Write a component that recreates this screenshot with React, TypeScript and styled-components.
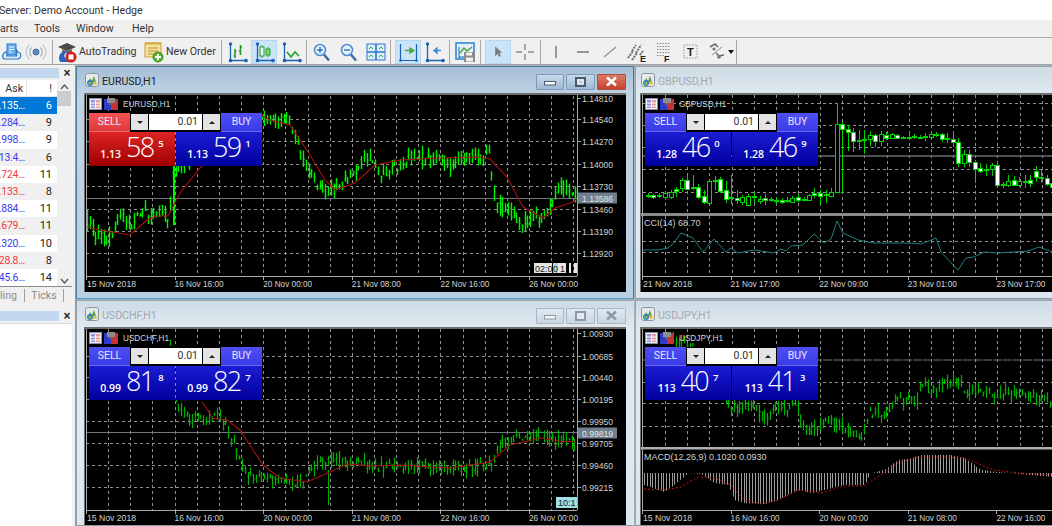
import React from "react";
import styled, { createGlobalStyle } from "styled-components";

const Global = createGlobalStyle`
  html, body { margin: 0; padding: 0; background: #fff; }
  #root { width: 1052px; height: 526px; overflow: hidden; }
  * { box-sizing: border-box; }
`;

const UI = `"Roboto", "Liberation Sans", sans-serif`;
const CHART = `"Liberation Sans", sans-serif`;

const Page = styled.div`
  width: 1052px; height: 526px; overflow: hidden; display: flex; flex-direction: column;
  font-family: ${UI}; color: #222; background: #f0f0f0;
`;
const TitleBar = styled.div`
  height: 20px; flex: none; background: #fff; font-size: 10.6px; line-height: 21px; color: #333;
  white-space: nowrap; text-indent: -1px;
`;
const MenuBar = styled.div`
  height: 17px; flex: none; background: #f0f0f0; display: flex; font-size: 10.6px; line-height: 18px; color: #333;
`;
const MenuItem = styled.span<{ $w: number }>` width: ${p => p.$w}px; flex: none; `;
const Toolbar = styled.div`
  height: 28px; flex: none; display: flex; align-items: center; background: #f0f0f0; padding-top: 1px;
  border-top: 1px solid #a9a9a9; border-bottom: 1px solid #a3a3a3;
`;
const ToolBtn = styled.div<{ $w?: number; $on?: boolean; $ml?: number; $text?: boolean }>`
  width: ${p => p.$w ?? 26}px; height: 24px; flex: none; display: flex; align-items: center;
  justify-content: ${p => (p.$text ? "flex-start" : "center")};
  padding-left: ${p => (p.$text ? 2 : 0)}px;
  margin-left: ${p => p.$ml ?? 0}px; font-size: 10.6px; gap: 2px; color: #333; white-space: nowrap;
  background: ${p => (p.$on ? "#cbe3f7" : "transparent")};
  border: 1px solid ${p => (p.$on ? "#b4d8f4" : "transparent")};
`;
const ToolSep = styled.div<{ $w?: number }>`
  width: ${p => p.$w ?? 4}px; height: 24px; flex: none; display: flex; justify-content: center;
  &::after { content: ""; width: 1px; height: 100%; background: #a8a8a8; }
`;
const Body = styled.div` flex: 1; display: flex; min-height: 0; `;

/* left docked panels */
const Side = styled.div`
  width: 75px; flex: none; display: flex; flex-direction: column; background: #f0f0f0; overflow: hidden; font-size: 10.6px;
`;
const PanelHead = styled.div`
  height: 14px; flex: none; display: flex; align-items: center; margin-top: 1px;
`;
const PanelStrip = styled.div` width: 59px; height: 10px; background: #c2d7ee; `;
const CloseX = styled.span`
  width: 16px; text-align: center; font-size: 12px; font-weight: 700; color: #222; line-height: 10px; font-family: "Liberation Sans", sans-serif;
`;
const Watch = styled.div` height: 206px; flex: none; display: flex; background: #fff; margin-right: 4px; `;
const WatchTable = styled.div` width: 57px; flex: none; display: flex; flex-direction: column; `;
const WatchHead = styled.div`
  height: 17px; display: grid; grid-template-columns: 27px 30px; line-height: 17px; background: #fff; color: #333; border-bottom: 1px solid #e4e4e4; font-size: 10.6px;
`;
const HeadCell = styled.div`
  text-align: right; padding-right: 3px; border-right: 1px solid #e2e2e2; &:last-child { padding-right: 5px; border-right: 0; }
`;
const WatchRow = styled.div<{ $sel?: boolean; $alt?: boolean }>`
  height: 17.3px; display: grid; grid-template-columns: 27px 30px; line-height: 18px; font-size: 11px;
  background: ${p => (p.$sel ? "#0078d7" : p.$alt ? "#f0f0f0" : "#fff")};
  color: ${p => (p.$sel ? "#fff" : "#222")};
  overflow: hidden;
`;
const AskCell = styled.div<{ $c: string }>`
  display: flex; justify-content: flex-end; padding-right: 2px; color: ${p => p.$c}; white-space: nowrap; font-size: 10.4px; letter-spacing: -0.2px;
`;
const SpreadCell = styled.div` text-align: right; padding-right: 5px; `;
const Scroll = styled.div`
  width: 14px; flex: none; background: #f0f0f0; display: flex; flex-direction: column; align-items: center; justify-content: space-between; padding: 4px 0 2px;
`;
const ScrollThumb = styled.div` width: 14px; height: 15px; background: #cdcdcd; margin-top: 1px; `;
const ScrollSpace = styled.div` flex: 1; `;
const Tabs = styled.div`
  height: 17px; flex: none; border-top: 1px solid #8a8a8a; display: flex; align-items: center; color: #8a8a8a; font-size: 10.6px; margin-right: 3px;
`;
const TabItem = styled.div<{ $w: number; $cut?: boolean }>`
  width: ${p => p.$w}px; flex: none; text-align: ${p => (p.$cut ? "left" : "center")}; border-right: 1px solid #a0a0a0; height: 13px; line-height: 13px;
`;
const SideGap = styled.div` height: 5px; flex: none; `;
const Navigator = styled.div` flex: 1; background: #fff; margin-right: 3px; border-top: 1px solid #d9d9d9; `;

/* MDI */
const Mdi = styled.div`
  flex: 1; display: grid; grid-template-columns: 558px 419px; grid-template-rows: 234px 226px;
  padding-top: 1px; background: #a8b2bd; border-left: 1px solid #8d98a3; overflow: hidden;
`;
const Win = styled.div<{ $active?: boolean; $right?: boolean; $top?: boolean }>`
  display: flex; flex-direction: column; overflow: hidden; min-width: 0;
  margin-left: ${p => (p.$right ? 1 : 0)}px;
  margin-bottom: ${p => (p.$top ? 1 : 0)}px;
  padding: ${p => (p.$right ? "0 0 0 4px" : "0 7px")};
  padding-bottom: ${p => (p.$top ? 6 : 0)}px;
  border: 1px solid ${p => (p.$active ? "#4c7f9c" : "#9aa4ae")};
  border-right-color: ${p => (p.$active ? "#2b7fa3" : "transparent")};
  border-bottom-color: ${p => (p.$active ? "#42a3c4" : "#8f98a1")};
  background: ${p => (p.$active ? "linear-gradient(#a5bed7 0, #c0d4e5 28px, #b8cfe2 100%)" : "linear-gradient(#cfdbe5 0, #e0eaf1 30px, #dbe7f0 100%)")};
`;
const WinTitle = styled.div`
  height: 26px; flex: none; display: flex; align-items: center; padding-left: 1px; gap: 3px;
`;
const WinName = styled.span<{ $active?: boolean }>`
  font-size: 10.6px; color: ${p => (p.$active ? "#222" : "#a3a9af")}; flex: 1; padding-top: 2px;
`;
const WinButtons = styled.div` display: flex; gap: 2px; margin-top: 3px; `;
const WinBtn = styled.div<{ $close?: boolean; $active?: boolean; $w: number }>`
  width: ${p => p.$w}px; height: 16px; display: flex; align-items: center; justify-content: center;
  border: 1px solid ${p => (p.$active ? (p.$close ? "#a8503e" : "#7f9ab4") : "#aab7c2")};
  border-radius: 1px;
  background: ${p =>
    p.$active
      ? p.$close
        ? "linear-gradient(#dc7a66, #c8402e)"
        : "linear-gradient(#c8daea, #9fbad3)"
      : "linear-gradient(#e0e9f0, #cbd7e1)"};
`;
const Frame = styled.div`
  flex: 1; position: relative; min-height: 0; background: #000;
  border-top: 2px solid #6e6e6e; border-left: 1px solid #6e6e6e; overflow: hidden;
`;
const ChartSvg = styled.svg` display: block; `;

/* one-click trading panel */
const Trade = styled.div`
  position: absolute; left: 4px; top: 18px; width: 173px; display: flex; flex-direction: column;
  font-family: "Open Sans", "Liberation Sans", sans-serif; color: #fff;
`;
const TradeTop = styled.div` height: 19px; display: flex; justify-content: space-between; `;
const SmallBtn = styled.div<{ $red?: boolean }>`
  width: 41px; height: 19px; text-align: center; font-size: 10.5px; line-height: 17px; color: #e4e6ff;
  background: ${p => (p.$red ? "linear-gradient(#f65252, #dc3a3a)" : "linear-gradient(#4f4ff4, #3a3ae6)")};
  box-shadow: inset 0 -1px 0 ${p => (p.$red ? "#e86a6a" : "#6a6af0")}, inset 0 -2px 0 ${p => (p.$red ? "#dc3a3a" : "#3a3ae6")};
  font-family: ${UI};
`;
const LotBox = styled.div`
  width: 91px; height: 19px; display: flex; background: #000; padding: 1px 1px 2px; gap: 1px; color: #333;
  font-family: ${UI};
`;
const LotArrow = styled.div`
  width: 17px; flex: none; background: #e4e4e4; display: flex; align-items: center; justify-content: center;
`;
const LotValue = styled.div`
  flex: 1; background: #fff; text-align: right; font-size: 10.5px; line-height: 16px; padding-right: 4px;
`;
const TradeBottom = styled.div` height: 34px; display: flex; gap: 1px; `;
const PriceCell = styled.div<{ $red?: boolean }>`
  flex: 1; display: flex; align-items: flex-start; justify-content: center; line-height: 1;
  background: ${p => (p.$red ? "linear-gradient(#de2424, #a00000)" : "linear-gradient(#1c1cd4, #00009e)")};
`;
const PriceHead = styled.span` font-size: 10.5px; font-weight: 600; margin-top: 17px; margin-right: 5px; `;
const PriceMain = styled.span` font-size: 27px; font-weight: 300; margin-top: 1px; letter-spacing: -1.8px; `;
const PricePip = styled.span` font-size: 9.5px; font-weight: 600; margin-top: 7px; margin-left: 5px; `;

/* ---------- chart helpers ---------- */
type Pt = [number, number];
const rng = (seed: number) => () => {
  seed = (seed * 16807) % 2147483647;
  return seed / 2147483647;
};
const interp = (k: Pt[], x: number) => {
  if (x <= k[0][0]) return k[0][1];
  for (let i = 1; i < k.length; i++) {
    if (x <= k[i][0]) {
      const t = (x - k[i - 1][0]) / (k[i][0] - k[i - 1][0]);
      return k[i - 1][1] + t * (k[i][1] - k[i - 1][1]);
    }
  }
  return k[k.length - 1][1];
};
const barsPath = (k: Pt[], x0: number, x1: number, seed: number, vol = 5) => {
  const r = rng(seed);
  let d = "";
  for (let x = x0; x < x1; x += 2.77) {
    const m = interp(k, x);
    const o = m + (r() - 0.5) * vol;
    const c = m + (r() - 0.5) * vol;
    const h = Math.min(o, c) - r() * vol * 0.7;
    const l = Math.max(o, c) + r() * vol * 0.7;
    const X = Math.round(x) + 0.5;
    d += `M${X} ${h.toFixed(1)}V${l.toFixed(1)}M${X - 1} ${o.toFixed(1)}H${X}M${X} ${c.toFixed(1)}H${X + 1}`;
  }
  return d;
};
const line = (k: Pt[]) => "M" + k.map(p => p.join(" ")).join("L");

const gridXs = (from: number, to: number) => {
  const a: number[] = [];
  for (let x = from; x < to; x += 22.15) a.push(Math.round(x) + 0.5);
  return a;
};

const GridLines: React.FC<{ ys: number[]; xFrom: number; xTo: number; yTop: number; yBot: number }> = ({ ys, xFrom, xTo, yTop, yBot }) => (
  <g stroke="#8f8f8f" strokeDasharray="3 3" shapeRendering="crispEdges" strokeWidth={1}>
    {ys.map(y => <line key={y} x1={xFrom} x2={xTo} y1={y + 0.5} y2={y + 0.5} />)}
    {gridXs(xFrom + 22.15, xTo).map(x => <line key={x} x1={x} x2={x} y1={yTop} y2={yBot} />)}
  </g>
);

const Dates: React.FC<{ labels: string[]; x0: number; y: number; xEnd: number; top: number }> = ({ labels, x0, y, xEnd, top }) => (
  <g>
    <g stroke="#a8a8a8" shapeRendering="crispEdges">
      <line x1={x0} x2={xEnd} y1={y + 0.5} y2={y + 0.5} />
      <line x1={x0 + 0.5} x2={x0 + 0.5} y1={top} y2={y + 4} />
      {labels.map((_, i) => {
        const x = Math.round(x0 + 88.6 * i) + 0.5;
        return <line key={i} x1={x} x2={x} y1={y} y2={y + 4} />;
      })}
    </g>
    <g fill="#d2d2d2" fontFamily={CHART} fontSize="9">
      {labels.map((l, i) => <text key={l} x={x0 + 88.6 * i + (i ? 0 : 1)} y={y + 10.5} textLength={49} lengthAdjust="spacingAndGlyphs">{l}</text>)}
    </g>
  </g>
);

const Prices: React.FC<{ rows: [string, number][]; x: number; yTop: number; yBot: number }> = ({ rows, x, yTop, yBot }) => (
  <g>
    <line x1={x + 0.5} x2={x + 0.5} y1={yTop} y2={yBot} stroke="#a8a8a8" shapeRendering="crispEdges" />
    {rows.map(([t, y]) => (
      <g key={t}>
        <line x1={x} x2={x + 4} y1={y + 0.5} y2={y + 0.5} stroke="#a8a8a8" shapeRendering="crispEdges" />
        <text x={x + 5} y={y + 3.5} fill="#d2d2d2" fontFamily={CHART} fontSize="9" textLength={31} lengthAdjust="spacingAndGlyphs">{t}</text>
      </g>
    ))}
  </g>
);

const Bid: React.FC<{ label: string; x: number; y: number }> = ({ label, x, y }) => (
  <g>
    <rect x={x + 1} y={y - 5.5} width={39} height={11} fill="#6f7f90" />
    <text x={x + 5} y={y + 3.5} fill="#e2e6ea" fontFamily={CHART} fontSize="9" textLength={31} lengthAdjust="spacingAndGlyphs">{label}</text>
  </g>
);

const LEFT_DATES = ["15 Nov 2018", "16 Nov 16:00", "20 Nov 00:00", "21 Nov 08:00", "22 Nov 16:00", "26 Nov 00:00"];

const eurBars: Pt[] = [[86, 222], [90, 218], [95, 243], [100, 232], [105, 240], [110, 235], [115, 228], [120, 212], [125, 224], [130, 224], [140, 214], [150, 212], [160, 211], [168, 222], [173, 172], [178, 168], [262, 120], [280, 122], [290, 118], [295, 140], [300, 150], [305, 165], [315, 182], [320, 190], [330, 190], [340, 185], [350, 176], [360, 165], [370, 158], [380, 175], [390, 170], [400, 165], [410, 158], [420, 158], [430, 160], [440, 160], [450, 165], [460, 160], [470, 158], [480, 155], [490, 153], [492, 188], [497, 205], [505, 210], [513, 215], [523, 222], [533, 216], [540, 220], [550, 210], [555, 195], [560, 187], [570, 190], [576, 198]];
const eurMa: Pt[] = [[87, 227], [100, 230], [130, 235], [147, 220], [157, 216], [168, 216], [180, 193], [200, 168], [262, 116], [270, 120], [290, 125], [310, 155], [325, 180], [335, 190], [355, 183], [375, 165], [400, 160], [440, 158], [480, 157], [490, 159], [507, 177], [523, 207], [543, 218], [555, 208], [573, 202], [576, 199]];

const chfBars: Pt[] = [[170, 345], [176, 400], [180, 410], [187, 418], [207, 420], [220, 415], [227, 430], [233, 443], [243, 465], [247, 475], [253, 478], [267, 478], [280, 482], [293, 482], [303, 485], [310, 470], [320, 460], [340, 462], [360, 463], [377, 467], [420, 466], [470, 468], [490, 465], [500, 445], [510, 440], [530, 436], [545, 437], [560, 442], [576, 440]];
const chfMa: Pt[] = [[202, 402], [213, 418], [227, 420], [240, 430], [253, 450], [263, 465], [280, 478], [307, 482], [330, 472], [347, 464], [373, 466], [400, 465], [450, 468], [490, 462], [510, 445], [540, 438], [560, 441], [576, 442]];

const gbpRaw: [number, number, number, number, number, number][] = [
  [647, 195, 196, 193, 198, 0], [652, 195, 197, 194, 199, 0], [658, 195, 196, 193, 198, 0], [664, 193, 197, 191, 200, 1],
  [670, 192, 197, 190, 199, 1], [675, 189, 191, 187, 197, 0], [681, 180, 188, 178, 192, 1], [686, 180, 189, 176, 190, 0],
  [692, 187, 188, 175, 190, 0], [697, 187, 197, 184, 199, 0], [703, 196, 202, 190, 204, 0], [708, 181, 203, 180, 204, 1],
  [714, 180, 181, 176, 190, 0], [719, 179, 191, 177, 193, 0], [725, 190, 199, 181, 203, 0], [730, 197, 198, 175, 204, 0],
  [736, 198, 200, 190, 204, 0], [741, 197, 202, 195, 205, 1], [747, 196, 205, 194, 206, 1], [753, 196, 197, 192, 203, 0],
  [759, 199, 201, 196, 204, 1], [764, 198, 200, 194, 205, 0], [770, 199, 200, 197, 202, 0], [775, 200, 201, 197, 205, 0],
  [781, 200, 202, 198, 204, 0], [786, 200, 201, 197, 203, 0], [791, 198, 202, 196, 203, 1], [797, 197, 200, 194, 202, 0],
  [803, 199, 200, 197, 201, 0], [808, 195, 200, 194, 201, 1], [813, 193, 195, 188, 198, 0], [819, 193, 196, 190, 205, 0],
  [825, 194, 195, 190, 203, 0], [830, 192, 196, 188, 197, 1],
  [836, 124, 192, 103, 192, 1], [841, 124, 129, 122, 193, 0], [847, 129, 132, 125, 151, 0], [852, 132, 141, 128, 152, 0],
  [858, 140, 141, 130, 150, 0], [863, 139, 140, 130, 154, 0], [869, 135, 139, 131, 146, 1], [874, 135, 141, 134, 147, 0],
  [880, 134, 141, 131, 146, 1], [885, 135, 138, 132, 140, 0], [891, 134, 138, 133, 139, 1], [896, 135, 138, 134, 139, 0],
  [902, 137, 138, 136, 139, 0], [908, 137, 138, 133, 140, 0], [913, 136, 137, 134, 139, 0], [919, 137, 138, 135, 139, 0],
  [924, 136, 137, 133, 141, 0], [930, 134, 137, 133, 138, 1], [935, 134, 135, 132, 137, 0], [941, 134, 139, 133, 142, 0],
  [946, 138, 139, 133, 143, 0], [952, 139, 142, 132, 147, 0], [957, 142, 163, 138, 167, 0], [963, 154, 163, 150, 167, 1],
  [968, 154, 162, 150, 167, 0], [974, 162, 169, 160, 183, 0], [979, 168, 171, 163, 173, 0], [985, 169, 170, 164, 176, 0],
  [991, 165, 169, 163, 176, 1], [996, 165, 185, 162, 186, 0], [1002, 184, 185, 182, 188, 0], [1007, 181, 185, 175, 187, 1],
  [1013, 180, 185, 176, 186, 0], [1018, 181, 185, 177, 187, 1], [1024, 181, 182, 175, 188, 0], [1029, 180, 183, 175, 187, 0],
  [1035, 171, 177, 166, 182, 0], [1040, 177, 178, 170, 183, 0], [1046, 178, 184, 175, 186, 0], [1051, 183, 187, 175, 190, 0],
];
const cci: Pt[] = [[642, 250], [657, 250], [667, 248], [673, 243], [680, 233], [692, 238], [702, 252], [713, 239], [725, 252], [730, 248], [737, 253], [753, 250], [773, 253], [780, 249], [785, 251], [790, 246], [802, 245], [813, 234], [823, 243], [830, 239], [836, 221], [842, 233], [857, 240], [873, 243], [907, 243], [920, 244], [935, 238], [940, 252], [957, 270], [965, 258], [973, 257], [983, 252], [997, 253], [1027, 251], [1038, 247], [1052, 252]];

const jpyBars: Pt[] = [[672, 343], [690, 345], [729, 407], [747, 405], [757, 412], [767, 416], [773, 408], [787, 408], [797, 405], [800, 425], [807, 430], [817, 428], [827, 420], [837, 425], [847, 432], [860, 435], [865, 425], [868, 415], [875, 412], [888, 412], [893, 398], [907, 402], [917, 398], [920, 385], [928, 390], [940, 385], [952, 382], [960, 383], [963, 390], [977, 390], [980, 395], [988, 393], [1013, 395], [1027, 392], [1037, 400], [1052, 403]];
const macdVal: Pt[] = [[643, 485], [663, 492], [673, 485], [687, 473], [700, 474], [713, 483], [727, 485], [733, 500], [743, 503], [763, 504], [777, 500], [797, 490], [810, 493], [823, 490], [843, 485], [863, 485], [870, 473], [883, 470], [897, 460], [907, 459], [920, 455], [950, 455], [963, 458], [980, 470], [997, 472], [1052, 477]];
const macdSig: Pt[] = [[643, 489], [663, 490], [680, 487], [697, 477], [713, 478], [730, 485], [743, 500], [760, 504], [777, 500], [797, 490], [820, 493], [843, 486], [863, 486], [883, 473], [897, 463], [917, 457], [940, 457], [963, 458], [993, 470], [1017, 473], [1052, 475]];

const EurChart = () => (
  <ChartSvg width={540} height={197} viewBox="85 95 540 197">
    <GridLines ys={[119, 141, 164, 186, 209, 231, 253]} xFrom={86} xTo={577} yTop={96} yBot={276} />
    <line x1={86} x2={577} y1={198.5} y2={198.5} stroke="#6c7580" shapeRendering="crispEdges" />
    <path d={barsPath(eurBars, 87, 577, 91, 11)} stroke="#00f000" fill="none" strokeWidth={1.4} />
    <path d="M173.5 225V166M174.5 225V166" stroke="#00f000" />
    <path d={line(eurMa)} stroke="#a81010" fill="none" strokeWidth={1.1} />
    <Prices x={577} yTop={95} yBot={276} rows={[["1.14810", 98], ["1.14540", 119], ["1.14270", 141], ["1.14000", 164], ["1.13730", 186], ["1.13460", 209], ["1.13190", 231], ["1.12920", 253]]} />
    <Bid label="1.13586" x={577} y={198} />
    <Dates labels={LEFT_DATES} x0={86} y={276} xEnd={577} top={95} />
    <g fontFamily={CHART} fontSize="9">
      <rect x={534} y={263} width={18} height={10} fill="#e6e6e6" />
      <rect x={553} y={263} width={5} height={10} fill="#a8dce0" />
      <rect x={558} y={263} width={8} height={10} fill="#e6e6e6" />
      <rect x={569} y={263} width={2} height={10} fill="#e6e6e6" />
      <rect x={574} y={263} width={3} height={10} fill="#e6e6e6" />
      <text x={535} y={271.5} fill="#222">02:0</text>
      <text x={553} y={271.5} fill="#222">0</text>
      <text x={560} y={271.5} fill="#222">1</text>
    </g>
  </ChartSvg>
);

const ChfChart = () => (
  <ChartSvg width={540} height={197} viewBox="85 329 540 197">
    <GridLines ys={[356, 377, 399, 421, 443, 465, 487]} xFrom={86} xTo={577} yTop={329} yBot={510} />
    <line x1={86} x2={577} y1={432.5} y2={432.5} stroke="#6c7580" shapeRendering="crispEdges" />
    <path d={barsPath(chfBars, 170, 577, 57, 10)} stroke="#00b000" fill="none" strokeWidth={1.2} />
    <path d="M328.5 470V505" stroke="#00b000" />
    <path d={line(chfMa)} stroke="#a81010" fill="none" strokeWidth={1.1} />
    <Prices x={577} yTop={329} yBot={510} rows={[["1.00930", 333], ["1.00685", 356], ["1.00440", 377], ["1.00195", 399], ["0.99950", 421], ["0.99705", 443], ["0.99460", 465], ["0.99215", 487]]} />
    <Bid label="0.99819" x={577} y={433} />
    <Dates labels={LEFT_DATES} x0={86} y={510} xEnd={577} top={329} />
    <rect x={556} y={497} width={21} height={11} fill="#9fdfe6" />
    <text x={558} y={506} fontFamily={CHART} fontSize="9" fill="#123">10:1</text>
  </ChartSvg>
);

const GbpChart = () => (
  <ChartSvg width={412} height={197} viewBox="640 95 412 197">
    <GridLines ys={[103, 125, 147, 169, 192]} xFrom={642} xTo={1052} yTop={95} yBot={213} />
    <line x1={642} x2={1052} y1={156} y2={156} stroke="#666c72" strokeWidth={1.5} />
    {gbpRaw.map(([x, t, b, h, l, dark]) => (
      <g key={x}>
        <line x1={x + 0.5} x2={x + 0.5} y1={h} y2={l} stroke="#00d400" shapeRendering="crispEdges" />
        <rect x={x - 1.5} y={t} width={4} height={Math.max(b - t, 1)} fill={dark ? "#000" : "#fff"} stroke="#00d400" strokeWidth={1} shapeRendering="crispEdges" />
      </g>
    ))}
    <rect x={640} y={213} width={412} height={3} fill="#8a8a8a" />
    <GridLines ys={[241, 252]} xFrom={642} xTo={1052} yTop={216} yBot={276} />
    <path d={line(cci)} stroke="#1f7f80" fill="none" strokeWidth={1} />
    <text x={643} y={226} fill="#d2d2d2" fontFamily={CHART} fontSize="9">CCI(14) 68.70</text>
    <Dates labels={["21 Nov 2018", "21 Nov 17:00", "22 Nov 09:00", "23 Nov 01:00", "23 Nov 17:00"]} x0={641} y={276} xEnd={1052} top={95} />
  </ChartSvg>
);

const macdBars = () => {
  let d = "";
  for (let x = 643; x < 1052; x += 2.77) {
    const X = Math.round(x) + 0.5;
    d += `M${X} 473V${interp(macdVal, x).toFixed(1)}`;
  }
  return d;
};

const JpyChart = () => (
  <ChartSvg width={412} height={197} viewBox="640 329 412 197">
    <GridLines ys={[382, 403, 426]} xFrom={642} xTo={1052} yTop={329} yBot={447} />
    <line x1={642} x2={1052} y1={360} y2={360} stroke="#6c7278" strokeWidth={1} strokeDasharray="9 1" />
    <path d={barsPath(jpyBars, 672, 1052, 33, 10)} stroke="#00b000" fill="none" strokeWidth={1.2} />
    <rect x={640} y={447} width={412} height={2.5} fill="#b0b0b0" />
    <path d={macdBars()} stroke="#9c9c9c" fill="none" strokeWidth={1} />
    <path d={line(macdSig)} stroke="#c41010" fill="none" strokeWidth={1} strokeDasharray="2 2" />
    <text x={643} y={460} fill="#d2d2d2" fontFamily={CHART} fontSize="9">MACD(12,26,9) 0.1020 0.0930</text>
    <Dates labels={LEFT_DATES.slice(0, 5)} x0={641} y={510} xEnd={1052} top={329} />
  </ChartSvg>
);

/* ---------- icons ---------- */
const MtLogo = () => (
  <svg width="14" height="14" viewBox="0 0 14 14">
    <rect x="0.5" y="0.5" width="13" height="13" rx="2" fill="#e6e9ec" stroke="#8c96a0" />
    <path d="M3 11 L5 5 L7 8 L9 3 L11 9 Z" fill="#5aa04a" />
    <circle cx="5" cy="10" r="3" fill="#2f7fc4" />
    <path d="M3 9 h4 l-1 3 h-2z" fill="#7ab648" />
    <path d="M8 9 l3-1 1 3 -3 1z" fill="#e8b93a" />
  </svg>
);
const ChartLegendIcons = styled.div`
  position: absolute; left: 4px; top: 3px; display: flex; align-items: center; gap: 2px;
  font-family: "Liberation Sans", sans-serif; font-size: 8.2px; color: #d6d6d6;
`;
const LegendName = styled.span` margin-left: 3px; `;
const TableIcon = () => (
  <svg width="13" height="12" viewBox="0 0 13 12">
    <rect x="0.5" y="0.5" width="12" height="11" fill="#eef0f8" stroke="#8a8fb0" />
    <rect x="2" y="2" width="4" height="8" fill="#8f8fe0" />
    <rect x="7" y="2" width="4" height="8" fill="#ea9a9a" />
    <path d="M1 5h11M1 8h11" stroke="#fff" />
  </svg>
);
const SaveIcon = () => (
  <svg width="14" height="12" viewBox="0 0 14 12">
    <rect x="0" y="1" width="7" height="11" fill="#2d3bc8" />
    <rect x="7" y="1" width="7" height="11" fill="#c23434" />
    <rect x="3" y="0" width="8" height="5" fill="#8d8d8d" />
    <rect x="5" y="5" width="3" height="2" fill="#666" />
  </svg>
);
const Axes = () => (
  <g stroke="#1c62b4" strokeWidth="1.3" fill="#1c62b4">
    <path d="M5.5 3V19.5H21" fill="none" />
    <circle cx="5.5" cy="3" r="1" />
    <circle cx="21" cy="19.5" r="1.2" />
    <circle cx="5.5" cy="19.5" r="1.2" />
  </g>
);
const Ic: React.FC<{ children: React.ReactNode; s?: number }> = ({ children, s = 24 }) => (
  <svg width={s} height={22} viewBox={`0 0 ${s} 22`} style={{ flex: "none" }}>{children}</svg>
);
const IconCloud = () => (
  <Ic>
    <path d="M5 18h13a3.5 3.5 0 0 0 .6-7 5 5 0 0 0-1-2V15 H8V11 A4 4 0 0 0 5 18z" fill="#dbeaf9" stroke="#2e77c8" strokeWidth="1.2" />
    <rect x="8" y="3" width="9" height="11" fill="#6aaef0" stroke="#2e77c8" />
    <path d="M10 6h5M10 8.5h5M10 11h3" stroke="#fff" />
  </Ic>
);
const IconSignal = () => (
  <Ic>
    <circle cx="12" cy="11" r="3" fill="#5a88bd" stroke="#3a6ea8" />
    <path d="M7.5 6.5a6.5 6.5 0 0 0 0 9M16.5 6.5a6.5 6.5 0 0 1 0 9" stroke="#aab2bc" strokeWidth="1.3" fill="none" />
    <path d="M5 4a10 10 0 0 0 0 14M19 4a10 10 0 0 1 0 14" stroke="#c4c9cf" strokeWidth="1.3" fill="none" />
  </Ic>
);
const IconAuto = () => (
  <Ic s={20}>
    <path d="M1 6 L10 2 L19 6 L10 10Z" fill="#4a4a44" />
    <path d="M5 8v3c3 2 7 2 10 0V8l-5 2z" fill="#76705c" />
    <path d="M2 18a7 7 0 0 1 14-2v5H3z" fill="#2b62bc" />
    <path d="M9 11l2 4-2 3-2-3z" fill="#e8e8e8" />
    <circle cx="14" cy="16" r="5.5" fill="#d4201c" />
    <rect x="11.5" y="13.5" width="5" height="5" fill="#fff" />
  </Ic>
);
const IconOrder = () => (
  <Ic s={20}>
    <rect x="1" y="2" width="16" height="14" fill="#f6e29a" stroke="#c8a040" />
    <path d="M1 2.5h16" stroke="#d4aa3c" strokeWidth="2" />
    <path d="M4 7h10M4 10h10M4 13h6" stroke="#b89038" />
    <circle cx="14" cy="16" r="5" fill="#58b030" stroke="#3f8f20" />
    <path d="M11 16h6M14 13v6" stroke="#fff" strokeWidth="2" />
  </Ic>
);
const IconBars = () => (
  <Ic><Axes /><path d="M10 8v9M8.5 15h1.5M10 10h1.5M15.5 4v10M14 10h1.5M15.5 6h1.5" stroke="#20a030" strokeWidth="1.6" fill="none" /></Ic>
);
const IconCandles = () => (
  <Ic>
    <Axes />
    <path d="M10 4v13M16 6v10" stroke="#20a030" strokeWidth="1" />
    <rect x="8" y="6" width="4" height="9" fill="#f0f8e8" stroke="#20a030" />
    <rect x="14" y="8" width="4" height="6" fill="#8fd070" stroke="#20a030" />
  </Ic>
);
const IconLine = () => (
  <Ic><Axes /><path d="M8 11l4 5 4-5 4 4" stroke="#20a030" strokeWidth="1.6" fill="none" /></Ic>
);
const IconZoom: React.FC<{ plus?: boolean }> = ({ plus }) => (
  <Ic>
    <circle cx="10" cy="9" r="5.5" fill="#e6f2fc" stroke="#4f8fd0" strokeWidth="1.6" />
    <path d="M14 13.5l5 6" stroke="#3c6ea4" strokeWidth="2.6" />
    <path d={plus ? "M7 9h6M10 6v6" : "M7 9h6"} stroke="#2f74c0" strokeWidth="1.4" />
  </Ic>
);
const IconTile = () => (
  <Ic>
    <rect x="3" y="3" width="18" height="16" fill="#d8ecfa" stroke="#2e77c8" />
    <path d="M12 3v16M3 11h18" stroke="#2e77c8" strokeWidth="1.6" />
    <path d="M5 8l2-2 2 2M15 8l2-2 2 2M5 16l2-2 2 2M15 16l2-2 2 2" stroke="#40a040" fill="none" />
  </Ic>
);
const IconShift = () => (
  <Ic>
    <path d="M4.5 3V19.5H20M20.5 3v16" stroke="#1c62b4" strokeWidth="1.2" fill="none" />
    <circle cx="4.5" cy="19.5" r="1.2" fill="#1c62b4" /><circle cx="20.5" cy="19.5" r="1.2" fill="#1c62b4" />
    <path d="M9 9.5h5M14 7l4 2.5-4 2.5z" stroke="#48a848" strokeWidth="1.4" fill="#48a848" />
  </Ic>
);
const IconAuto2 = () => (
  <Ic>
    <Axes />
    <path d="M15 9.5h4M15 7l-3 2.5 3 2.5z" stroke="#3a90dc" strokeWidth="1.4" fill="#3a90dc" />
  </Ic>
);
const IconSaveChart = () => (
  <Ic>
    <rect x="3" y="2" width="18" height="16" fill="#e4f0fa" stroke="#2e88d8" strokeWidth="1.6" />
    <path d="M6 6v11M6 16h12" stroke="#1c62b4" />
    <path d="M7 12l4-5 3 3 5-4" stroke="#40a040" strokeWidth="1.4" fill="none" />
    <rect x="11" y="11" width="11" height="10" fill="#8a8a8a" />
    <rect x="13" y="11.5" width="6" height="3" fill="#eee" />
    <rect x="13" y="16.5" width="7" height="4" fill="#eee" />
  </Ic>
);
const IconCursor = () => (
  <Ic><path d="M9.5 6l6 5.5-2.6.4 1.6 3-1.3.7-1.6-3-2.1 1.9z" fill="#7a7a7a" stroke="#777" strokeWidth="0.6" /></Ic>
);
const IconCross = () => (
  <Ic><path d="M12 3v6M12 13v6M3 11h6M15 11h6" stroke="#8a8a8a" strokeWidth="1.4" /></Ic>
);
const IconV = () => <Ic><path d="M12 5v12" stroke="#9a9a9a" strokeWidth="2" /></Ic>;
const IconH = () => <Ic><path d="M6 11h12" stroke="#7d7d7d" strokeWidth="1.6" /></Ic>;
const IconT = () => <Ic><path d="M6 16L18 6" stroke="#9a9a9a" strokeWidth="1.6" /></Ic>;
const GlyphLabel = styled.text`
  font-family: "Liberation Sans", sans-serif; font-weight: 700; font-size: 9px; fill: #222;
`;
const IconFibE = () => (
  <Ic>
    <path d="M3 17l5-7M7 19l5-7M7 10l4-6M11 12l5-8M15 14l3-4" stroke="#6f6f6f" strokeWidth="2" strokeDasharray="2 1" fill="none" />
    <GlyphLabel x="15" y="20.5">E</GlyphLabel>
  </Ic>
);
const IconFibF = () => (
  <Ic>
    <path d="M5 2.5h13M5 5.5h13M5 8.5h13M5 11.5h13M5 14.5h7" stroke="#888" strokeDasharray="1.5 1.2" fill="none" />
    <GlyphLabel x="12" y="21">F</GlyphLabel>
  </Ic>
);
const IconText = () => (
  <Ic>
    <rect x="5" y="4" width="13" height="13" fill="none" stroke="#9a9a9a" strokeDasharray="1.5 1.2" />
    <GlyphLabel x="8" y="15" style={{ fontSize: 11 }}>T</GlyphLabel>
  </Ic>
);
const IconArrows = () => (
  <Ic s={20}>
    <path d="M3 6l5-3 3 3M9 12l3 3 5-1" stroke="#6a6a6a" strokeWidth="1.6" fill="none" />
    <path d="M5 14l10-8" stroke="#8a8a8a" />
    <circle cx="12" cy="16" r="1.8" fill="#777" />
    <circle cx="7" cy="8" r="1.6" fill="#777" />
  </Ic>
);
const Caret = styled.span`
  width: 0; height: 0; border-left: 3.5px solid transparent; border-right: 3.5px solid transparent; border-top: 4px solid #111; flex: none; margin-left: -1px;
`;
const LotGlyph = styled.span<{ $up?: boolean }>`
  width: 0; height: 0; border-left: 3px solid transparent; border-right: 3px solid transparent;
  ${p => (p.$up ? "border-bottom: 3px solid #222;" : "border-top: 3px solid #222;")}
`;
const Chevron: React.FC<{ up?: boolean }> = ({ up }) => (
  <svg width="9" height="6" viewBox="0 0 9 6">
    <path d={up ? "M1 5l3.5-4L8 5" : "M1 1l3.5 4L8 1"} stroke="#555" strokeWidth="1.3" fill="none" />
  </svg>
);

const WinGlyph: React.FC<{ kind: "min" | "max" | "close"; active?: boolean }> = ({ kind, active }) => {
  const c = active ? "#fff" : "#f4f7fa";
  const dark = active ? "#4a5c6e" : "#8a97a4";
  if (kind === "min") return <svg width="12" height="8" viewBox="0 0 12 8"><rect x="0.5" y="3.5" width="11" height="3.5" fill={c} stroke={dark} /></svg>;
  if (kind === "max") return <svg width="11" height="10" viewBox="0 0 11 10"><rect x="1" y="1" width="9" height="8" fill="none" stroke={dark} strokeWidth="2" /><rect x="3" y="3" width="5" height="4" fill="none" stroke={c} /></svg>;
  return <svg width="13" height="11" viewBox="0 0 13 11"><path d="M2 1.5l9 8M11 1.5l-9 8" stroke={active ? "#fff" : "#8f9ba6"} strokeWidth="2.6" /></svg>;
};

/* ---------- data ---------- */
const WATCH: [string, string, boolean][] = [
  [".135…", "6", false], [".284…", "9", false], [".998…", "9", false], ["13.4…", "6", false],
  [".724…", "11", true], [".133…", "8", true], [".884…", "11", false], [".679…", "11", true],
  [".320…", "10", false], ["28.8…", "8", true], ["45.6…", "14", false],
];

interface Quote { head: string; big: string; pip: string }
interface TradeInfo { red?: boolean; sell: Quote; buy: Quote }

const TradePanel: React.FC<TradeInfo> = ({ red, sell, buy }) => (
  <Trade>
    <TradeTop>
      <SmallBtn $red={red}>SELL</SmallBtn>
      <LotBox>
        <LotArrow><LotGlyph /></LotArrow>
        <LotValue>0.01</LotValue>
        <LotArrow><LotGlyph $up /></LotArrow>
      </LotBox>
      <SmallBtn>BUY</SmallBtn>
    </TradeTop>
    <TradeBottom>
      <PriceCell $red={red}>
        <PriceHead>{sell.head}</PriceHead><PriceMain>{sell.big}</PriceMain><PricePip>{sell.pip}</PricePip>
      </PriceCell>
      <PriceCell>
        <PriceHead>{buy.head}</PriceHead><PriceMain>{buy.big}</PriceMain><PricePip>{buy.pip}</PricePip>
      </PriceCell>
    </TradeBottom>
  </Trade>
);

const ChartWindow: React.FC<{
  name: string; active?: boolean; right?: boolean; top?: boolean; buttons?: boolean; trade: TradeInfo; chart: React.ReactNode;
}> = ({ name, active, right, top, buttons, trade, chart }) => (
  <Win $active={active} $right={right} $top={top}>
    <WinTitle>
      <MtLogo />
      <WinName $active={active}>{name}</WinName>
      {buttons && (
        <WinButtons>
          <WinBtn $w={28} $active={active}><WinGlyph kind="min" active={active} /></WinBtn>
          <WinBtn $w={29} $active={active}><WinGlyph kind="max" active={active} /></WinBtn>
          <WinBtn $w={29} $close $active={active}><WinGlyph kind="close" active={active} /></WinBtn>
        </WinButtons>
      )}
    </WinTitle>
    <Frame>
      {chart}
      <ChartLegendIcons>
        <TableIcon /><SaveIcon /><LegendName>{name}</LegendName>
      </ChartLegendIcons>
      <TradePanel {...trade} />
    </Frame>
  </Win>
);

export default function App() {
  return (
    <Page>
      <Global />
      <TitleBar>Server: Demo Account - Hedge</TitleBar>
      <MenuBar>
        <MenuItem $w={34}>arts</MenuItem>
        <MenuItem $w={42}>Tools</MenuItem>
        <MenuItem $w={56}>Window</MenuItem>
        <MenuItem $w={30}>Help</MenuItem>
      </MenuBar>
      <Toolbar>
        <ToolBtn $w={22}><IconCloud /></ToolBtn>
        <ToolBtn $w={28}><IconSignal /></ToolBtn>
        <ToolSep />
        <ToolBtn $w={85} $text><IconAuto />AutoTrading</ToolBtn>
        <ToolBtn $w={78} $ml={2} $text><IconOrder />New Order</ToolBtn>
        <ToolSep />
        <ToolBtn $ml={1}><IconBars /></ToolBtn>
        <ToolBtn $ml={1} $on><IconCandles /></ToolBtn>
        <ToolBtn $ml={1}><IconLine /></ToolBtn>
        <ToolSep />
        <ToolBtn $ml={1}><IconZoom plus /></ToolBtn>
        <ToolBtn $ml={1}><IconZoom /></ToolBtn>
        <ToolBtn $ml={1}><IconTile /></ToolBtn>
        <ToolSep $w={3} />
        <ToolBtn $ml={3} $on><IconShift /></ToolBtn>
        <ToolBtn><IconAuto2 /></ToolBtn>
        <ToolSep $w={5} />
        <ToolBtn><IconSaveChart /></ToolBtn>
        <ToolSep />
        <ToolBtn $ml={3} $on><IconCursor /></ToolBtn>
        <ToolBtn $ml={1}><IconCross /></ToolBtn>
        <ToolSep />
        <ToolBtn $ml={1}><IconV /></ToolBtn>
        <ToolBtn $ml={1}><IconH /></ToolBtn>
        <ToolBtn $ml={1}><IconT /></ToolBtn>
        <ToolBtn $ml={1}><IconFibE /></ToolBtn>
        <ToolBtn $ml={1}><IconFibF /></ToolBtn>
        <ToolBtn $ml={1}><IconText /></ToolBtn>
        <ToolBtn $ml={3}><IconArrows /><Caret /></ToolBtn>
        <ToolSep $w={7} />
      </Toolbar>
      <Body>
        <Side>
          <PanelHead><PanelStrip /><CloseX>×</CloseX></PanelHead>
          <Watch>
            <WatchTable>
              <WatchHead><HeadCell>Ask</HeadCell><HeadCell>!</HeadCell></WatchHead>
              {WATCH.map(([ask, sp, red], i) => (
                <WatchRow key={ask} $sel={i === 0} $alt={i % 2 === 1}>
                  <AskCell $c={i === 0 ? "#fff" : red ? "#f03838" : "#3a3af0"}>{ask}</AskCell>
                  <SpreadCell>{sp}</SpreadCell>
                </WatchRow>
              ))}
            </WatchTable>
            <Scroll>
              <Chevron up />
              <ScrollThumb />
              <ScrollSpace />
              <Chevron />
            </Scroll>
          </Watch>
          <Tabs><TabItem $w={25} $cut>ling</TabItem><TabItem $w={39}>Ticks</TabItem></Tabs>
          <SideGap />
          <PanelHead><PanelStrip /><CloseX>×</CloseX></PanelHead>
          <Navigator />
        </Side>
        <Mdi>
          <ChartWindow name="EURUSD,H1" active top buttons chart={<EurChart />}
            trade={{ red: true, sell: { head: "1.13", big: "58", pip: "5" }, buy: { head: "1.13", big: "59", pip: "1" } }} />
          <ChartWindow name="GBPUSD,H1" right top chart={<GbpChart />}
            trade={{ sell: { head: "1.28", big: "46", pip: "0" }, buy: { head: "1.28", big: "46", pip: "9" } }} />
          <ChartWindow name="USDCHF,H1" buttons chart={<ChfChart />}
            trade={{ sell: { head: "0.99", big: "81", pip: "8" }, buy: { head: "0.99", big: "82", pip: "7" } }} />
          <ChartWindow name="USDJPY,H1" right chart={<JpyChart />}
            trade={{ sell: { head: "113", big: "40", pip: "7" }, buy: { head: "113", big: "41", pip: "3" } }} />
        </Mdi>
      </Body>
    </Page>
  );
}
